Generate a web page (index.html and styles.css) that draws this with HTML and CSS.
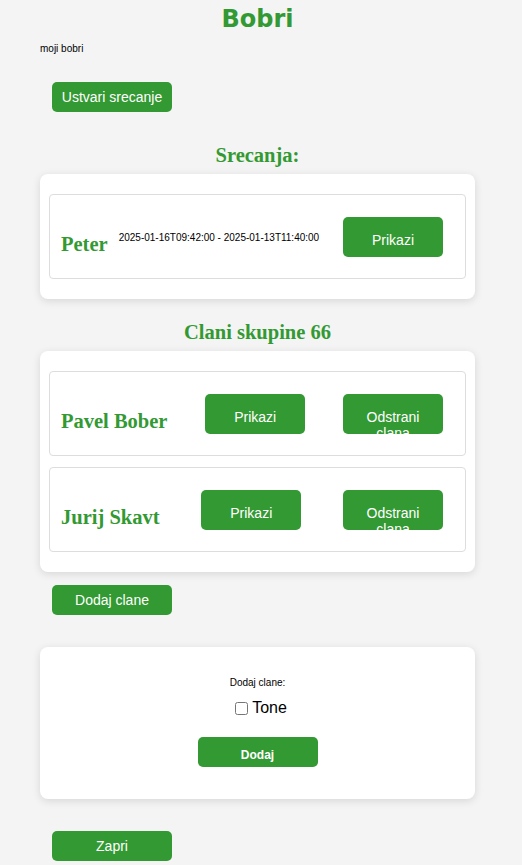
FILE: index.html
```html
<!DOCTYPE html>
<html lang="sl">
<head>
<meta charset="utf-8">
<title>Bobri</title>
<link rel="stylesheet" href="styles.css">
</head>
<body>
<div class="page">
  <h1 class="title">Bobri</h1>
  <p class="subtitle">moji bobri</p>
  <button class="btn btn-sm btn-create">Ustvari srecanje</button>

  <h2 class="section-title section-first">Srecanja:</h2>
  <div class="card">
    <div class="item">
      <h3 class="item-name">Peter</h3>
      <span class="item-date">2025-01-16T09:42:00 - 2025-01-13T11:40:00</span>
      <button class="btn btn-lg push-right"><span>Prikazi</span></button>
    </div>
  </div>

  <h2 class="section-title section-next">Clani skupine 66</h2>
  <div class="card">
    <div class="item item-member">
      <h3 class="item-name">Pavel Bober</h3>
      <button class="btn btn-lg"><span>Prikazi</span></button>
      <button class="btn btn-lg"><span>Odstrani clana</span></button>
    </div>
    <div class="item item-member">
      <h3 class="item-name">Jurij Skavt</h3>
      <button class="btn btn-lg"><span>Prikazi</span></button>
      <button class="btn btn-lg"><span>Odstrani clana</span></button>
    </div>
  </div>

  <button class="btn btn-sm btn-add">Dodaj clane</button>

  <div class="card card-form">
    <form class="add-form">
      <p class="form-label">Dodaj clane:</p>
      <label class="check-row"><input type="checkbox" class="check"><span>Tone</span></label>
      <button type="button" class="btn btn-submit">Dodaj</button>
    </form>
  </div>

  <button class="btn btn-sm btn-close">Zapri</button>
</div>
</body>
</html>
```
FILE: styles.css
```css
* { box-sizing: border-box; }

body {
  margin: 0;
  background: #f4f4f4;
  font-family: "Liberation Sans", Arial, sans-serif;
  color: #000;
}

.page {
  margin-left: 40px;
  width: 435px;
  padding-top: 5px;
  display: flex;
  flex-direction: column;
}

.title {
  margin: 0;
  text-align: center;
  font-family: "DejaVu Sans", Verdana, sans-serif;
  font-weight: bold;
  font-size: 24px;
  line-height: 28px;
  color: #339933;
}

.subtitle {
  margin: 10px 0 0;
  font-size: 10px;
  line-height: 12px;
}

.btn {
  background: #339933;
  color: #fff;
  border: none;
  border-radius: 5px;
  font-family: "Liberation Sans", Arial, sans-serif;
  cursor: pointer;
  flex: none;
}

.btn-sm {
  align-self: flex-start;
  margin-left: 12px;
  width: 120px;
  height: 30px;
  padding: 0;
  font-size: 14px;
}

.btn-create { margin-top: 27px; }
.btn-add { margin-top: 13px; }
.btn-close { margin-top: 32px; }

.section-title {
  margin: 0 0 7px;
  text-align: center;
  font-family: "Liberation Serif", "Times New Roman", serif;
  font-weight: bold;
  font-size: 20.5px;
  line-height: 24px;
  color: #339933;
}

.section-first { margin-top: 31px; }
.section-next { margin-top: 21px; }

.card {
  background: #fff;
  border-radius: 8px;
  box-shadow: 0 2px 8px rgba(0, 0, 0, 0.12);
  padding: 20px 9px;
  display: flex;
  flex-direction: column;
  gap: 11px;
}

.item {
  border: 1px solid #dddddd;
  border-radius: 4px;
  padding: 22px 22px 21px 11px;
  display: flex;
  align-items: center;
}

.item-member { justify-content: space-between; }

.item-name {
  margin: 13px 0 0;
  font-family: "Liberation Serif", "Times New Roman", serif;
  font-weight: bold;
  font-size: 20.5px;
  line-height: 24px;
  color: #339933;
  white-space: nowrap;
}

.item-date {
  margin: 2px 0 0 11px;
  font-size: 10px;
  line-height: 12px;
  white-space: nowrap;
}

.push-right { margin-left: auto; }

.btn-lg {
  width: 100px;
  height: 40px;
  padding: 15px 20px 0;
  font-size: 14px;
  line-height: 16px;
  overflow: hidden;
  display: flex;
  flex-direction: column;
  justify-content: flex-start;
  align-items: center;
  text-align: center;
}

.card-form {
  margin-top: 32px;
  padding: 30px 9px 32px;
}

.add-form {
  margin: 0;
  display: flex;
  flex-direction: column;
  align-items: center;
}

.form-label {
  margin: 0;
  font-size: 10px;
  line-height: 12px;
}

.check-row {
  margin-top: 10px;
  height: 18px;
  display: flex;
  align-items: center;
  font-size: 16px;
  line-height: 18px;
}

.check {
  width: 13px;
  height: 13px;
  margin: 0 4px 0 7px;
}

.btn-submit {
  margin-top: 20px;
  width: 120px;
  height: 30px;
  padding: 11px 0 5px;
  font-size: 12px;
  font-weight: bold;
  line-height: 14px;
}
```
